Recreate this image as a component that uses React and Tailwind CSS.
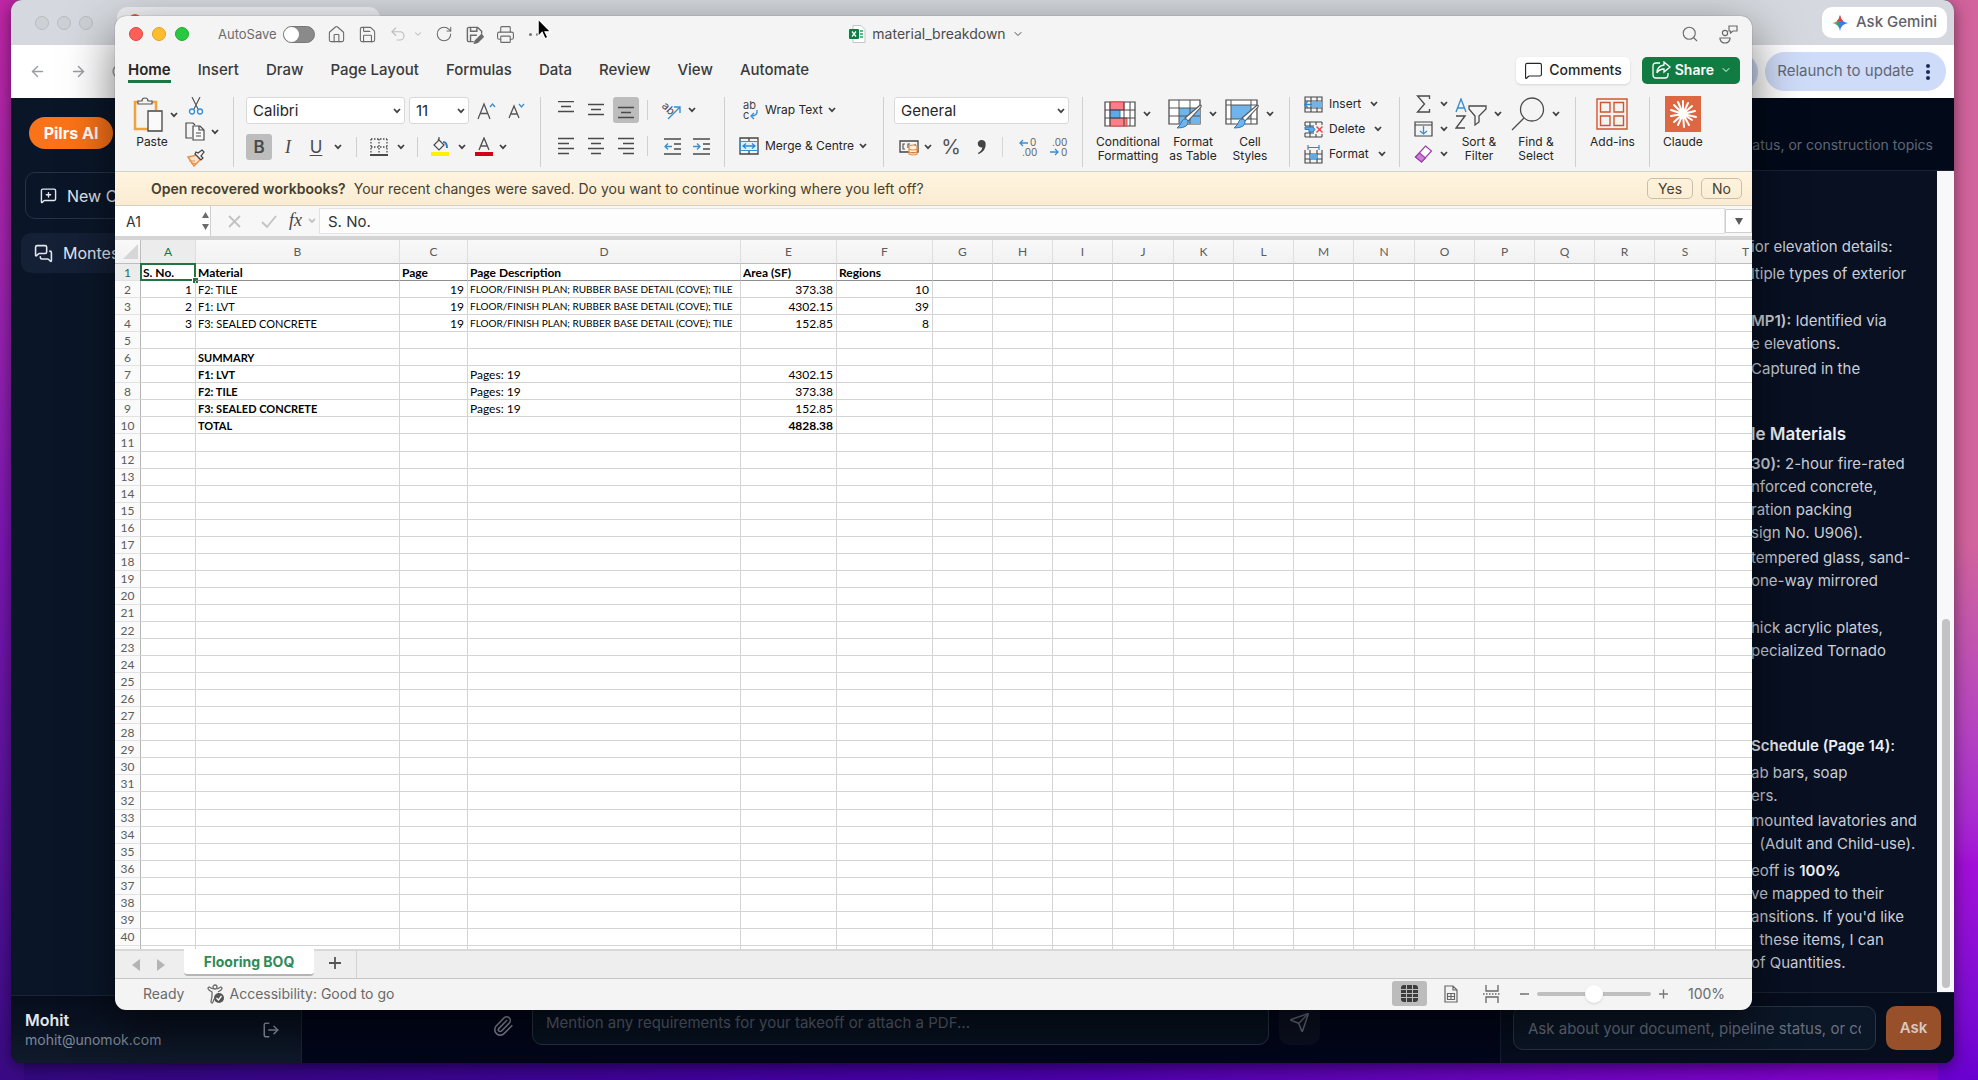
import { useState } from 'react';
import {
    ArrowLeft,
    ArrowRight,
    ChevronDown,
    House,
    LogOut,
    MessageSquare,
    MessageSquarePlus,
    MessagesSquare,
    Paperclip,
    Printer,
    RotateCw,
    Save,
    Search,
    Send,
    Undo2,
} from 'lucide-react';

const tabs = ['Insert', 'Draw', 'Page Layout', 'Formulas', 'Data', 'Review', 'View', 'Automate'];

const columns = [
    { name: 'A', width: 'w-[55px]' },
    { name: 'B', width: 'w-[204px]' },
    { name: 'C', width: 'w-[68px]' },
    { name: 'D', width: 'w-[273px]' },
    { name: 'E', width: 'w-[96px]' },
    { name: 'F', width: 'w-[96px]' },
    { name: 'G', width: 'w-[60px]' },
    { name: 'H', width: 'w-[60px]' },
    { name: 'I', width: 'w-[60px]' },
    { name: 'J', width: 'w-[61px]' },
    { name: 'K', width: 'w-[60px]' },
    { name: 'L', width: 'w-[60px]' },
    { name: 'M', width: 'w-[60px]' },
    { name: 'N', width: 'w-[61px]' },
    { name: 'O', width: 'w-[60px]' },
    { name: 'P', width: 'w-[60px]' },
    { name: 'Q', width: 'w-[60px]' },
    { name: 'R', width: 'w-[60px]' },
    { name: 'S', width: 'w-[61px]' },
    { name: 'T', width: 'w-[60px]' },
];

const plan = 'FLOOR/FINISH PLAN; RUBBER BASE DETAIL (COVE); TILE';

const cells = {
    1: { A: 'S. No.', B: 'Material', C: 'Page', D: 'Page Description', E: 'Area (SF)', F: 'Regions' },
    2: { A: 1, B: 'F2: TILE', C: 19, D: plan, E: '373.38', F: 10 },
    3: { A: 2, B: 'F1: LVT', C: 19, D: plan, E: '4302.15', F: 39 },
    4: { A: 3, B: 'F3: SEALED CONCRETE', C: 19, D: plan, E: '152.85', F: 8 },
    6: { B: 'SUMMARY' },
    7: { B: 'F1: LVT', D: 'Pages: 19', E: '4302.15' },
    8: { B: 'F2: TILE', D: 'Pages: 19', E: '373.38' },
    9: { B: 'F3: SEALED CONCRETE', D: 'Pages: 19', E: '152.85' },
    10: { B: 'TOTAL', E: '4828.38' },
};

const isBold = (row, col) => row === 1 || row === 10 || (row > 5 && col === 'B');
const isRight = (row, col) => row > 1 && (col === 'A' || col === 'C' || col === 'E' || col === 'F');

// capitals run wide in Lato, so the all-caps cells go a step down
function cellSize(row, col) {
    if (row > 1 && row < 5 && col === 'D') return 'text-[10px]/[15px]';
    if (row > 1 && col === 'B') return 'text-[11px]/[15px]';
    return 'text-[12px]/[15px]';
}

function Chev({ className = 'w-[10px]' }) {
    return (
        <span className={`flex shrink-0 justify-center ${className}`}>
            <svg width="8" height="6" viewBox="0 0 8 6" fill="none" stroke="#3f3f3f" strokeWidth="1.7">
                <path d="M1 1l3 3.2L7 1" />
            </svg>
        </span>
    );
}

function IconButton({ label, className = 'w-[26px]', children }) {
    return (
        <button aria-label={label} className={`flex h-[26px] shrink-0 items-center justify-center rounded-[3px] ${className}`}>
            {children}
        </button>
    );
}

function Divider() {
    return <span className="mx-2 h-5 w-px shrink-0 bg-[#cfcfcf]" />;
}

function Group({ className, children }) {
    return <div className={`flex h-[70px] shrink-0 border-r border-[#d0d0d0] ${className}`}>{children}</div>;
}

function Lines({ rows, shift = 0 }) {
    return (
        <svg width="16" height="18" viewBox="0 0 16 18" stroke="#4a4a4a" strokeWidth="1.3">
            {rows.map(([x1, x2], i) => (
                <path key={i} d={`M${x1} ${1.5 + shift + i * 5}H${x2}`} />
            ))}
        </svg>
    );
}

function BigButton({ icon, label, chevron = true, className }) {
    return (
        <button className={`flex shrink-0 flex-col items-center ${className}`}>
            <span className="flex h-[38px] items-center gap-1.5 pb-1">
                {icon}
                {chevron && <Chev />}
            </span>
            <span className="text-xs/[14px] whitespace-pre text-[#262626]">{label}</span>
        </button>
    );
}

function Brush() {
    return (
        <g>
            <path d="M33 9L20 23l-3-3L31 8q3-2 2 1z" fill="#f7f7f7" stroke="#555" strokeWidth="1.1" />
            <path d="M20 23q1 7-11 7 4-3 5-7 3-4 6 0z" fill="#6fb4ea" stroke="#2b7bc0" strokeWidth="1" />
        </g>
    );
}

function TitleBar() {
    return (
        <div className="grid h-9 shrink-0 grid-cols-[1fr_auto_1fr] items-center pl-[14px] text-[#6b6b6b]">
            <div className="flex items-center">
                <div className="flex gap-[9px]">
                    <button aria-label="Close" className="size-[14px] rounded-full border border-[#e0443e] bg-[#fe5f57]" />
                    <button aria-label="Minimise" className="size-[14px] rounded-full border border-[#dfa023] bg-[#febc2e]" />
                    <button aria-label="Zoom" className="size-[14px] rounded-full border border-[#1dad2b] bg-[#28c840]" />
                </div>
                <label className="ml-[29px] flex items-center gap-1.5 text-[13px]/5">
                    AutoSave
                    <input type="checkbox" className="peer sr-only" />
                    <span className="flex h-[17px] w-8 items-center rounded-full border border-[#777] bg-[#8a8a8a]">
                        <span className="size-[15px] rounded-full bg-white" />
                    </span>
                </label>
                <div className="ml-3 flex items-center gap-3">
                    <button aria-label="Home"><House size={19} strokeWidth={1.4} /></button>
                    <button aria-label="Save"><Save size={19} strokeWidth={1.4} /></button>
                    <button aria-label="Undo" className="flex items-center gap-1.5 text-[#bdbdbd]">
                        <Undo2 size={18} strokeWidth={1.5} />
                        <ChevronDown size={10} strokeWidth={2.5} />
                    </button>
                    <button aria-label="Redo"><RotateCw size={18} strokeWidth={1.4} /></button>
                    <button aria-label="Save as">
                        <svg width="19" height="19" viewBox="0 0 24 24" fill="none" stroke="currentColor" strokeWidth="1.8">
                            <path d="M11 21H5a2 2 0 0 1-2-2V5a2 2 0 0 1 2-2h11l5 5v3M7 3v5h8V3M7 21v-8h8" />
                            <path d="M21 12l-8 8-1 3 4-1 7-7z" fill="currentColor" />
                        </svg>
                    </button>
                    <button aria-label="Print"><Printer size={19} strokeWidth={1.4} /></button>
                    <button aria-label="More" className="ml-0.5 flex gap-1">
                        <span className="size-[3px] rounded-full bg-[#777]" />
                        <span className="size-[3px] rounded-full bg-[#777]" />
                        <span className="size-[3px] rounded-full bg-[#777]" />
                    </button>
                </div>
            </div>
            <button className="mr-2 flex items-center gap-1.5 text-[14px]/5 text-[#4c4c4c]">
                <svg width="17" height="18" viewBox="0 0 17 18">
                    <path d="M4 .5h8l4 4v13H4z" fill="#fff" stroke="#c4c4c4" />
                    <path d="M11 6h3M11 9h3M11 12h3" stroke="#21a366" strokeWidth="1.4" />
                    <rect y="4" width="10" height="10" rx="1" fill="#107c41" />
                    <path d="M3 6.500l4 5M7 6.500l-4 5" stroke="#fff" strokeWidth="1.3" />
                </svg>
                material_breakdown
                <ChevronDown size={12} strokeWidth={2} />
            </button>
            <div className="flex items-center justify-end gap-5 pr-[14px]">
                <button aria-label="Search"><Search size={18} strokeWidth={1.5} /></button>
                <button aria-label="Presence">
                    <svg width="19" height="19" viewBox="0 0 19 19" fill="none" stroke="currentColor" strokeWidth="1.2">
                        <circle cx="6" cy="8" r="2.600" />
                        <path d="M1 13h10v1q-1 4-5 4t-5-4zM10 1h8v5h-4l-2.500 2V6H10z" />
                    </svg>
                </button>
            </div>
        </div>
    );
}

function TabRow() {
    return (
        <div className="flex h-9 shrink-0 items-center justify-between pr-3 pl-[13px]">
            <nav className="flex items-center gap-[27px] text-[15px]/5 font-medium text-[#3a3a3a]">
                <button className="border-y-[3px] border-t-transparent border-b-[#217346] font-semibold text-[#262626]">Home</button>
                {tabs.map((tab) => (
                    <button key={tab}>{tab}</button>
                ))}
            </nav>
            <div className="flex gap-3 text-[14px]/5 font-medium">
                <button className="flex h-[27px] items-center gap-1.5 rounded-[5px] bg-white px-2 text-[#262626] shadow-sm">
                    <MessageSquare size={19} strokeWidth={1.4} />
                    Comments
                </button>
                <button className="flex h-[27px] items-center gap-1 rounded-[5px] bg-[#107c41] pr-2 pl-2.5 font-semibold text-white">
                    <svg width="19" height="18" viewBox="0 0 19 18" fill="none" stroke="#fff" strokeWidth="1.3">
                        <path d="M8 2H4Q1 2 1 5v9q0 3 3 3h9q3 0 3-3v-2" />
                        <path d="M12 1l6 5-6 5V8q-5 0-7 4 0-7 7-8z" />
                    </svg>
                    Share
                    <ChevronDown size={12} className="ml-0.5" />
                </button>
            </div>
        </div>
    );
}

function Ribbon() {
    return (
        <div className="flex h-[84px] shrink-0 border-b border-[#d5d2ca] pt-[9px] text-xs text-[#262626]">
            <Group className="w-[119px] pl-4">
                <button className="flex w-[52px] flex-col items-start">
                    <span className="flex h-[38px] items-start gap-1">
                        <svg width="34" height="36" viewBox="0 0 34 36" fill="none">
                            <path d="M8 5H4v27h14M20 5h5v8" stroke="#f0a33c" strokeWidth="2.500" />
                            <path d="M7 7V4h4q0-3 3-3t3 3h4v3z" stroke="#555" strokeWidth="1.2" fill="#f4f4f4" />
                            <path d="M17 14h14v20H17z" stroke="#444" strokeWidth="1.3" fill="#fafafa" />
                        </svg>
                        <Chev className="h-9 w-[10px] items-center" />
                    </span>
                    <span className="w-[42px] text-center leading-[14px]">Paste</span>
                </button>
                <div className="ml-px flex flex-col justify-between">
                    <button aria-label="Cut" className="w-6">
                        <svg width="16" height="18" viewBox="0 0 16 18" fill="none" className="mx-auto">
                            <path d="M4 0l6 12M12 0L6 12" stroke="#555" strokeWidth="1.2" />
                            <circle cx="4" cy="14.500" r="2.500" stroke="#2f8fdc" strokeWidth="1.3" />
                            <circle cx="12" cy="14.500" r="2.500" stroke="#2f8fdc" strokeWidth="1.3" />
                        </svg>
                    </button>
                    <button aria-label="Copy" className="flex items-center gap-1">
                        <svg width="22" height="20" viewBox="0 0 22 20" fill="none" stroke="#4a4a4a" strokeWidth="1.2">
                            <path d="M8 16H2V1h7l2 2" />
                            <path d="M9 4h7l4 4v10H9zM15 4v4h5M12 11h5M12 14h5" fill="#fafafa" />
                        </svg>
                        <Chev />
                    </button>
                    <button aria-label="Format painter" className="w-6">
                        <svg width="20" height="18" viewBox="0 0 20 18" fill="none" className="mx-auto">
                            <path d="M2 8l9-2 3 5-6 6z" stroke="#e8914a" strokeWidth="1.5" fill="#fde3c8" />
                            <path d="M3 12l6 0M5 14.500h5" stroke="#e8914a" />
                            <path d="M9 5l6 6 2-2-2-2 3-4-2-2-4 3-2-1z" stroke="#444" strokeWidth="1.2" fill="#f4f4f4" />
                        </svg>
                    </button>
                </div>
            </Group>

            <Group className="w-[307px] flex-col gap-[10px] pl-3">
                <div className="flex items-center gap-1 text-[15px]">
                    <div className="relative flex items-center">
                        <select aria-label="Font" className="h-[27px] w-[159px] appearance-none rounded-[3px] border border-[#d9d9d9] bg-white px-1.5">
                            <option>Calibri</option>
                        </select>
                        <Chev className="pointer-events-none absolute right-1 w-2" />
                    </div>
                    <div className="relative flex items-center">
                        <select aria-label="Font size" className="h-[27px] w-[60px] appearance-none rounded-[3px] border border-[#d9d9d9] bg-white px-1.5">
                            <option>11</option>
                        </select>
                        <Chev className="pointer-events-none absolute right-1 w-2" />
                    </div>
                    <IconButton label="Increase font size">
                        <svg width="19" height="18" viewBox="0 0 19 18" fill="none" stroke="#555" strokeWidth="1.3">
                            <path d="M1 17L7 2l6 15M3.500 11.500h7" />
                            <path d="M13 5l2.500-3L18 5" stroke="#3a8fd0" />
                        </svg>
                    </IconButton>
                    <IconButton label="Decrease font size">
                        <svg width="17" height="16" viewBox="0 0 17 16" fill="none" stroke="#555" strokeWidth="1.3">
                            <path d="M1 15L6 3l5 12M3 11h6" />
                            <path d="M11 1l2.500 3L16 1" stroke="#3a8fd0" />
                        </svg>
                    </IconButton>
                </div>
                <div className="flex items-center text-[17px] text-[#4a4a4a]">
                    <IconButton label="Bold" className="w-[26px] bg-[#bdbdbd] font-semibold">B</IconButton>
                    <IconButton label="Italic" className="w-8 font-['Liberation_Serif'] text-lg italic">I</IconButton>
                    <IconButton label="Underline" className="w-6 underline underline-offset-2">U</IconButton>
                    <Chev className="w-5" />
                    <Divider />
                    <IconButton label="Borders" className="w-7">
                        <svg width="18" height="18" viewBox="0 0 18 18" fill="none" stroke="#4a4a4a" strokeWidth="1.3">
                            <path d="M1 1h16M1 9h16M1 1v15M9 1v15M17 1v15" strokeDasharray="1.500 1.500" />
                            <path d="M0 17h18" strokeWidth="1.8" />
                        </svg>
                    </IconButton>
                    <Chev className="w-4" />
                    <Divider />
                    <IconButton label="Fill colour" className="w-7">
                        <svg width="18" height="20" viewBox="0 0 18 20" fill="none">
                            <path d="M7 2l6 6-5 5-5-5 5-5V0" stroke="#4a4a4a" strokeWidth="1.2" />
                            <path d="M12 5q4 0 4 6" stroke="#2f7fc8" strokeWidth="2" />
                            <path d="M0 17h18" stroke="#fff000" strokeWidth="4" />
                        </svg>
                    </IconButton>
                    <Chev className="w-4" />
                    <IconButton label="Font colour" className="w-7">
                        <svg width="18" height="20" viewBox="0 0 18 20" fill="none">
                            <path d="M4 13L9 1l5 12M6 9h6" stroke="#555" strokeWidth="1.4" />
                            <path d="M0 17h18" stroke="#d0021b" strokeWidth="4" />
                        </svg>
                    </IconButton>
                    <Chev />
                </div>
            </Group>

            <Group className="w-[184px] flex-col gap-[10px] pl-3">
                <div className="flex items-center">
                    <div className="flex gap-1">
                        <IconButton label="Top align"><Lines rows={[[0, 16], [3, 13], [0, 16]]} shift={-1} /></IconButton>
                        <IconButton label="Middle align"><Lines rows={[[0, 16], [3, 13], [0, 16]]} shift={2} /></IconButton>
                        <IconButton label="Bottom align" className="w-[26px] bg-[#bdbdbd]"><Lines rows={[[0, 16], [3, 13], [0, 16]]} shift={5} /></IconButton>
                    </div>
                    <Divider />
                    <IconButton label="Orientation" className="w-8">
                        <svg width="20" height="20" viewBox="0 0 20 20" fill="none" className="overflow-visible">
                            <text x="0" y="11" transform="rotate(45 5 8)" fontSize="11" fontFamily="Inter" fill="#444">ab</text>
                            <path d="M6 19L18 7M12 7h6v6" stroke="#3a8fd0" strokeWidth="1.4" />
                        </svg>
                    </IconButton>
                    <Chev className="w-2" />
                </div>
                <div className="flex items-center">
                    <div className="flex gap-1">
                        <IconButton label="Align left"><Lines rows={[[0, 16], [0, 11], [0, 16], [0, 11]]} /></IconButton>
                        <IconButton label="Align centre"><Lines rows={[[0, 16], [3, 13], [0, 16], [3, 13]]} /></IconButton>
                        <IconButton label="Align right"><Lines rows={[[0, 16], [5, 16], [0, 16], [5, 16]]} /></IconButton>
                    </div>
                    <Divider />
                    <IconButton label="Decrease indent" className="w-8">
                        <svg width="17" height="17" viewBox="0 0 17 17" fill="none" stroke="#4a4a4a" strokeWidth="1.3">
                            <path d="M0 1h17M10 6h7M10 11h7M0 16h17" />
                            <path d="M8 8.500H1M4 5.500l-3 3 3 3" stroke="#3a8fd0" />
                        </svg>
                    </IconButton>
                    <IconButton label="Increase indent">
                        <svg width="17" height="17" viewBox="0 0 17 17" fill="none" stroke="#4a4a4a" strokeWidth="1.3">
                            <path d="M0 1h17M10 6h7M10 11h7M0 16h17" />
                            <path d="M0 8.500h7M4 5.500l3 3-3 3" stroke="#3a8fd0" />
                        </svg>
                    </IconButton>
                </div>
            </Group>

            <Group className="w-[159px] flex-col gap-[10px] pl-3">
                <button className="flex h-[26px] items-center gap-1">
                    <svg width="24" height="22" viewBox="0 0 24 22" fill="none" className="overflow-visible">
                        <text x="6" y="10" fontSize="11" fontFamily="Inter" fill="#444">ab</text>
                        <text x="6" y="20" fontSize="11" fontFamily="Inter" fill="#444">c</text>
                        <path d="M20 11q1 6-6 6M17 14l-3 3 3 3" stroke="#3a8fd0" strokeWidth="1.4" />
                    </svg>
                    Wrap Text
                    <Chev />
                </button>
                <button className="flex h-[26px] items-center gap-1 whitespace-nowrap">
                    <svg width="24" height="18" viewBox="0 0 24 18" fill="none">
                        <path d="M3 1h18v16H3zM12 1v4M12 13v4" stroke="#444" strokeWidth="1.3" />
                        <path d="M3.500 4.500h17v9h-17z" fill="#dff0fd" stroke="#3a8fd0" />
                        <path d="M6 9h12M9 6.500L6 9l3 2.500M15 6.500L18 9l-3 2.500" stroke="#2f86d0" strokeWidth="1.3" />
                    </svg>
                    Merge &amp; Centre
                    <Chev />
                </button>
            </Group>

            <Group className="w-[199px] flex-col gap-[10px] pl-[10px]">
                <div className="relative flex w-[175px] items-center text-[15px]">
                    <select aria-label="Number format" className="h-[27px] w-full appearance-none rounded-[3px] border border-[#d9d9d9] bg-white px-1.5">
                        <option>General</option>
                    </select>
                    <Chev className="pointer-events-none absolute right-1 w-2" />
                </div>
                <div className="flex items-center text-[#555]">
                    <IconButton label="Currency" className="w-[30px]">
                        <svg width="20" height="18" viewBox="0 0 20 18" fill="none">
                            <path d="M1 3h18v11H1z" stroke="#444" strokeWidth="1.3" />
                            <path d="M6 6H4v5h2M11 6H9v4M16 6v2" stroke="#555" strokeWidth="1.2" />
                            <path d="M10 8q4-2 8 0v8q-4 2-8 0zM10 11q4 2 8 0M10 14q4 2 8 0" fill="#fff1e2" stroke="#ef8a3c" strokeWidth="1.200" />
                        </svg>
                    </IconButton>
                    <Chev className="w-2" />
                    <IconButton label="Percent" className="w-[38px] text-xl">%</IconButton>
                    <IconButton label="Comma style" className="w-[22px]">
                        <svg width="9" height="16" viewBox="0 0 9 16">
                            <path d="M4.500 1a3.700 3.700 0 1 0 .8 7.300Q5 12 1 14l.5 1.200Q9 12 8.700 5A4 4 0 0 0 4.500 1z" fill="#444" />
                        </svg>
                    </IconButton>
                    <span className="mx-2.5 h-5 w-px shrink-0 bg-[#d6d6d6]" />
                    <IconButton label="Increase decimal" className="w-[30px]">
                        <svg width="18" height="20" viewBox="0 0 18 20" fill="none" className="overflow-visible">
                            <text x="11" y="9" fontSize="10" fontFamily="Inter" fill="#666">0</text>
                            <text x="3" y="19" fontSize="10" fontFamily="Inter" fill="#666">.00</text>
                            <path d="M9 6H1M4 3L1 6l3 3" stroke="#3a8fd0" strokeWidth="1.3" />
                        </svg>
                    </IconButton>
                    <IconButton label="Decrease decimal" className="w-[30px]">
                        <svg width="18" height="20" viewBox="0 0 18 20" fill="none" className="overflow-visible">
                            <text x="3" y="9" fontSize="10" fontFamily="Inter" fill="#666">.00</text>
                            <text x="12" y="19" fontSize="10" fontFamily="Inter" fill="#666">0</text>
                            <path d="M1 15h8M6 12l3 3-3 3" stroke="#3a8fd0" strokeWidth="1.3" />
                        </svg>
                    </IconButton>
                </div>
            </Group>

            <Group className="w-[207px] pl-[9px]">
                <BigButton
                    className="w-[72px]"
                    label={'Conditional\nFormatting'}
                    icon={
                        <svg width="32" height="26" viewBox="0 0 32 26" fill="none">
                            <path d="M1 1h30v24H1z" fill="#fff" stroke="#444" strokeWidth="1.2" />
                            <path d="M6 1h14v8H6zM6 17h17v8H6z" fill="#fb7f86" stroke="#e5484d" />
                            <path d="M6 9h10v8H6z" fill="#5ea9e8" stroke="#2b7bc0" />
                            <path d="M1 9h30M1 17h30M6 1v24M20 1v24M26 1v24" stroke="#444" />
                        </svg>
                    }
                />
                <BigButton
                    className="w-[58px]"
                    label={'Format\nas Table'}
                    icon={
                        <svg width="34" height="32" viewBox="0 0 34 32" fill="none">
                            <path d="M1 2h31v24H1z" fill="#fff" stroke="#444" strokeWidth="1.2" />
                            <path d="M11 10h21v16H11z" fill="#6fb4ea" />
                            <path d="M1 10h31M1 18h31M11 2v24M22 2v24" stroke="#555" />
                            <Brush />
                        </svg>
                    }
                />
                <BigButton
                    className="w-[56px]"
                    label={'Cell\nStyles'}
                    icon={
                        <svg width="34" height="32" viewBox="0 0 34 32" fill="none">
                            <path d="M1 2h31v24H1z" fill="#fff" stroke="#444" strokeWidth="1.2" />
                            <path d="M6 7h20v14H6z" fill="#6fb4ea" />
                            <path d="M1 7h31M1 21h31M6 2v24M26 2v24" stroke="#555" />
                            <Brush />
                        </svg>
                    }
                />
            </Group>

            <Group className="w-[110px] pl-[14px]">
                <div className="-mt-1 flex flex-col gap-[3px]">
                    <button className="flex h-[22px] items-center gap-1.5">
                        <svg width="19" height="17" viewBox="0 0 19 17" fill="none">
                            <path d="M1 1h17v15H1zM1 5h17M1 12h17M7 1v15M13 1v15" stroke="#444" strokeWidth="1.1" />
                            <path d="M8 5.500h10v6H8z" fill="#6fb4ea" />
                            <path d="M8 8.500H1M4 5L.8 8.500 4 12" stroke="#2f86d0" strokeWidth="1.5" />
                        </svg>
                        Insert
                        <Chev className="ml-0.5 w-[10px]" />
                    </button>
                    <button className="flex h-[22px] items-center gap-1.5">
                        <svg width="19" height="17" viewBox="0 0 19 17" fill="none">
                            <path d="M1 1h17M1 16h17M1 1v4M1 12v4M18 1v3M18 13v3M6 1v15M12 1v3M12 13v3M1 5h9M1 12h9" stroke="#444" strokeWidth="1.1" />
                            <path d="M1 6h8l2 2.500L9 11H5V8.500H1z" fill="#5ea9e8" stroke="#2b7bc0" />
                            <path d="M12.500 5.500l6 6M18.500 5.500l-6 6" stroke="#e5484d" strokeWidth="1.5" />
                        </svg>
                        Delete
                        <Chev className="ml-0.5 w-[10px]" />
                    </button>
                    <button className="flex h-[22px] items-center gap-1.5">
                        <svg width="19" height="19" viewBox="0 0 19 19" fill="none">
                            <path d="M1 5v13h17V5M1 9h17M1 14h17M6 5v13M13 5v13" stroke="#444" strokeWidth="1.1" />
                            <path d="M6 9h7v5H6z" fill="#5ea9e8" />
                            <path d="M4 0v5M15 0v5M4 2.500h11" stroke="#2f86d0" strokeWidth="1.2" />
                        </svg>
                        Format
                        <Chev className="ml-0.5 w-[10px]" />
                    </button>
                </div>
            </Group>

            <Group className="w-[176px] pl-[14px]">
                <div className="-mt-1 flex flex-col gap-[3px]">
                    <button aria-label="AutoSum" className="flex h-[22px] items-center gap-1.5">
                        <svg width="19" height="18" viewBox="0 0 18 18" fill="none" stroke="#4a4a4a" strokeWidth="1.3">
                            <path d="M15 4V1H3l7 8-7 8h12v-3" />
                        </svg>
                        <Chev />
                    </button>
                    <button aria-label="Fill" className="flex h-[22px] items-center gap-1.5">
                        <svg width="19" height="16" viewBox="0 0 19 16" fill="none">
                            <path d="M1 1h17v14H1zM1 4h17" stroke="#444" strokeWidth="1.2" />
                            <path d="M9.500 5v8M6 10l3.500 3L13 10" stroke="#3a8fd0" strokeWidth="1.3" />
                        </svg>
                        <Chev />
                    </button>
                    <button aria-label="Clear" className="flex h-[22px] items-center gap-1.5">
                        <svg width="19" height="18" viewBox="0 0 18 18" fill="none" stroke="#9b3fa8" strokeWidth="1.2">
                            <path d="M11 1l6 5L7 17l-6-5z" fill="#fff" />
                            <path d="M5 8l6 5-4 4-6-5z" fill="#cf7fd8" />
                        </svg>
                        <Chev />
                    </button>
                </div>
                <BigButton
                    className="w-[60px]"
                    label={'Sort &\nFilter'}
                    icon={
                        <svg width="32" height="32" viewBox="0 0 32 32" fill="none">
                            <path d="M1 14L6 1l5 13M3 10h6" stroke="#3a8fd0" strokeWidth="1.4" />
                            <path d="M1 18h9L1 30h9" stroke="#4a4a4a" strokeWidth="1.4" />
                            <path d="M14 8h17v3l-7 7v6l-4 3v-9l-6-7z" stroke="#4a4a4a" strokeWidth="1.3" />
                        </svg>
                    }
                />
                <BigButton
                    className="w-[54px]"
                    label={'Find &\nSelect'}
                    icon={
                        <svg width="34" height="34" viewBox="0 0 34 34" fill="none" stroke="#4a4a4a" strokeWidth="1.3">
                            <circle cx="21" cy="12.500" r="11.500" />
                            <path d="M13 21L1 33" />
                        </svg>
                    }
                />
            </Group>

            <Group className="w-[74px] justify-center">
                <BigButton
                    chevron={false}
                    label="Add-ins"
                    icon={
                        <svg width="32" height="32" viewBox="0 0 32 32" fill="none" stroke="#d0552f" strokeWidth="1.4">
                            <path d="M1 1h30v30H1zM4.500 4.500h9.500v9.500H4.500zM18 4.500h9.500v9.500H18zM4.500 18h9.500v9.500H4.500zM18 18h9.500v9.500H18z" />
                        </svg>
                    }
                />
            </Group>

            <div className="ml-[13px]">
                <BigButton
                    chevron={false}
                    label="Claude"
                    icon={
                        <svg width="36" height="36" viewBox="0 0 36 36" fill="none">
                            <path d="M0 0h36v36H0z" fill="#dd6740" />
                            <path
                                d="M18 18V5M18 18l5-11M18 18l9-8M18 18l12-3M18 18l13 3M18 18l9 6M18 18l6 11M18 18l1 13M18 18l-5 11M18 18l-9 8M18 18l-12 2M18 18L6 14M18 18L9 9M18 18L13 6"
                                stroke="#fff"
                                strokeWidth="2"
                                strokeLinecap="round"
                            />
                        </svg>
                    }
                />
            </div>
        </div>
    );
}

function RecoveryBar() {
    return (
        <div className="flex h-[34px] shrink-0 items-center border-b border-[#d8d0bd] bg-linear-to-b from-[#fff4df] to-[#faecd2] pr-[10px] pl-9 text-[14px]/5 text-[#46402f]">
            <span className="font-semibold">Open recovered workbooks?</span>
            <span className="ml-2 grow">Your recent changes were saved. Do you want to continue working where you left off?</span>
            <button className="h-[21px] rounded-[5px] border border-[#c9bfa8] px-[10px] leading-[18px]">Yes</button>
            <button className="ml-2 h-[21px] rounded-[5px] border border-[#c9bfa8] px-[10px] leading-[18px]">No</button>
        </div>
    );
}

function FormulaBar() {
    const [value, setValue] = useState('S. No.');

    return (
        <div className="flex h-[34px] shrink-0 items-center border-b-4 border-[#d4d4d4] bg-[#f7f7f7] text-[14px] text-[#333]">
            <div className="flex h-full w-24 items-center border-r border-[#cfcfcf] bg-white pl-[11px]">
                <input aria-label="Name box" defaultValue="A1" className="w-[75px] outline-none" />
                <svg width="9" height="20" viewBox="0 0 9 20" fill="#6b6b6b" className="shrink-0">
                    <path d="M4.500 1L8 7H1zM4.500 19L8 13H1z" />
                </svg>
            </div>
            <svg width="104" height="18" viewBox="0 0 104 18" fill="none" className="shrink-0" stroke="#c2c2c2" strokeWidth="1.8">
                <path d="M18 4l11 11M29 4L18 15M51 10l5 5L65 4" />
                <text x="78" y="14" fontSize="18" fontStyle="italic" fontFamily="Liberation Serif" fill="#444" stroke="none">fx</text>
                <path d="M98 7l3 3 3-3" />
            </svg>
            <input
                aria-label="Formula"
                value={value}
                onChange={(e) => setValue(e.target.value)}
                className="ml-1 h-[26px] min-w-0 grow border border-[#e2e2e2] bg-[#fdfdfd] pl-2 text-[15px] outline-none"
            />
            <button aria-label="Expand formula bar" className="flex h-[24px] w-[27px] items-center justify-center border border-[#cfcfcf] bg-white">
                <svg width="8" height="7" viewBox="0 0 8 7" fill="#5a5a5a">
                    <path d="M0 0h8L4 7z" />
                </svg>
            </button>
        </div>
    );
}

function Sheet() {
    const rows = Array.from({ length: 41 }, (_, i) => i + 1);

    return (
        <div className="min-h-0 grow overflow-hidden bg-white">
            <table className="h-[723px] w-[1661px] table-fixed border-separate border-spacing-0 font-[Lato,sans-serif] text-[12px]/4 text-black">
                <colgroup>
                    <col className="w-[26px]" />
                    {columns.map((col) => (
                        <col key={col.name} className={col.width} />
                    ))}
                </colgroup>
                <thead>
                    <tr className="h-6 bg-linear-to-b from-[#f9f9f9] to-[#f1f1f1] text-[#5c5c5c]">
                        <th className="border-r border-b border-[#bdbdbd] p-0">
                            <svg width="17" height="16" viewBox="0 0 17 16" className="ml-auto">
                                <path d="M15 0v15H0z" fill="#d6d6d6" />
                            </svg>
                        </th>
                        {columns.map((col) => (
                            <th
                                key={col.name}
                                className={`border-r border-b border-r-[#dedede] border-b-[#bdbdbd] p-0 font-normal ${col.name === 'A' ? 'bg-[#ececec] text-[#217346]' : ''}`}
                            >
                                {col.name}
                            </th>
                        ))}
                    </tr>
                </thead>
                <tbody>
                    {rows.map((row) => (
                        <tr key={row} className="h-[17px]">
                            <th
                                className={`border-r border-b border-r-[#b5b5b5] border-b-[#e2e2e2] p-0 text-[12px]/[15px] font-normal ${row === 1 ? 'bg-[#ececec] text-[#217346]' : 'bg-[#fafafa] text-[#5c5c5c]'}`}
                            >
                                {row > 40 ? '' : row}
                            </th>
                            {columns.map((col) => (
                                <td
                                    key={col.name}
                                    className={`relative border-r border-r-[#d4d4d4] border-b p-0 whitespace-nowrap ${row === 1 ? 'border-b-[#8f8f8f]' : 'border-b-[#d4d4d4]'} ${isBold(row, col.name) ? 'font-bold' : ''} ${isRight(row, col.name) ? 'pr-[3px] text-right' : 'pl-[2px]'} ${cellSize(row, col.name)}`}
                                >
                                    <div className="overflow-hidden">{cells[row]?.[col.name]}</div>
                                    {row === 1 && col.name === 'A' && (
                                        <span className="absolute -inset-x-px -top-px -bottom-px border-2 border-[#217346]">
                                            <span className="absolute -right-1 -bottom-1 size-[6px] border-t border-l border-white bg-[#217346]" />
                                        </span>
                                    )}
                                </td>
                            ))}
                        </tr>
                    ))}
                </tbody>
            </table>
        </div>
    );
}

function SheetTabs() {
    return (
        <div className="flex h-[30px] shrink-0 border-t-2 border-b border-t-[#d8d8d8] border-b-[#c6c6c6] bg-[#eeeeee] text-[14px]/5">
            <div className="flex items-center gap-[17px] pl-[17px]">
                <button aria-label="Previous sheet">
                    <svg width="8" height="12" viewBox="0 0 8 12" fill="#b4b4b4"><path d="M8 0v12L0 6z" /></svg>
                </button>
                <button aria-label="Next sheet">
                    <svg width="8" height="12" viewBox="0 0 8 12" fill="#b4b4b4"><path d="M0 0v12l8-6z" /></svg>
                </button>
            </div>
            <button className="-mt-0.5 ml-[19px] h-[27px] w-[130px] rounded-b-[4px] border-b-2 border-[#b5b5b5] bg-white font-bold text-[#2f8a58]">Flooring BOQ</button>
            <button aria-label="Add sheet" className="flex w-[43px] items-center justify-center border-r border-[#d2d2d2] pb-1">
                <svg width="12" height="12" viewBox="0 0 12 12" stroke="#555" strokeWidth="1.8"><path d="M6 0v12M0 6h12" /></svg>
            </button>
        </div>
    );
}

function StatusBar() {
    return (
        <div className="flex h-[31px] shrink-0 items-center pr-7 pb-0.5 pl-7 text-[14px]/5 text-[#6a6a6a]">
            <span>Ready</span>
            <button className="ml-[23px] flex grow items-center gap-1">
                <svg width="18" height="20" viewBox="0 0 18 20" fill="none" stroke="#6a6a6a" strokeWidth="1.3">
                    <circle cx="8" cy="3" r="2" />
                    <path d="M6 5L2 3Q0 4 2 6l3 2v4l-1 6q1 2 2 0l1-3M10 5l4-2q2 1 0 3l-3 2" />
                    <circle cx="12" cy="14" r="5" fill="#555" stroke="none" />
                    <path d="M9.500 14l2 2 3-4" stroke="#fff" />
                </svg>
                Accessibility: Good to go
            </button>
            <button aria-label="Normal view" className="flex h-[25px] w-[35px] items-center justify-center rounded-[3px] bg-[#bcbcbc]">
                <svg width="17" height="17" viewBox="0 0 17 17">
                    <rect width="17" height="17" rx="3" fill="#3c3c3c" />
                    <path d="M0 4.500h17M0 8.500h17M0 12.500h17M5.500 0v17M11.500 0v17" stroke="#bcbcbc" />
                </svg>
            </button>
            <button aria-label="Page layout" className="ml-[17px]">
                <svg width="14" height="18" viewBox="0 0 14 18" fill="none" stroke="#666" strokeWidth="1.2">
                    <path d="M1 1h8l4 4v12H1zM9 1v4h4M3.500 8.500h7v6h-7zM3.500 11.500h7M7 8.500v6" />
                </svg>
            </button>
            <button aria-label="Page break preview" className="ml-[25px]">
                <svg width="18" height="18" viewBox="0 0 18 18" fill="none" stroke="#666" strokeWidth="1.3">
                    <path d="M3 0v6h12V0M3 18v-6h12v6" />
                    <path d="M0 9h18" strokeDasharray="1.500 1.500" />
                </svg>
            </button>
            <button aria-label="Zoom out" className="ml-[19px]">
                <svg width="9" height="10" viewBox="0 0 9 10" stroke="#777" strokeWidth="1.6"><path d="M0 5h9" /></svg>
            </button>
            <input
                type="range"
                aria-label="Zoom"
                className="mx-2 h-[18px] w-[114px] appearance-none bg-transparent [&::-webkit-slider-runnable-track]:h-1 [&::-webkit-slider-runnable-track]:rounded-full [&::-webkit-slider-runnable-track]:bg-[#bfbfbf] [&::-webkit-slider-thumb]:-mt-[7px] [&::-webkit-slider-thumb]:size-[18px] [&::-webkit-slider-thumb]:appearance-none [&::-webkit-slider-thumb]:rounded-full [&::-webkit-slider-thumb]:bg-white [&::-webkit-slider-thumb]:shadow"
            />
            <button aria-label="Zoom in">
                <svg width="9" height="10" viewBox="0 0 9 10" stroke="#777" strokeWidth="1.4"><path d="M0 5h9M4.500 .5v9" /></svg>
            </button>
            <span className="ml-5 w-9">100%</span>
        </div>
    );
}

function ExcelWindow() {
    return (
        <section className="absolute top-4 right-[226px] bottom-[70px] left-[115px] flex flex-col overflow-hidden rounded-[11px] bg-[#f4f4f4] shadow-[0_16px_50px_rgba(0,0,0,0.55),0_0_1px_rgba(0,0,0,0.6)]">
            <TitleBar />
            <TabRow />
            <Ribbon />
            <RecoveryBar />
            <FormulaBar />
            <Sheet />
            <SheetTabs />
            <StatusBar />
        </section>
    );
}

function Chat() {
    return (
        <div className="flex grow flex-col overflow-hidden pt-16 pl-[250px] text-[15px]/[23px] whitespace-pre text-[#c9ced8]">
            <p>ior elevation details:</p>
            <p className="mt-1">ltiple types of exterior</p>
            <p className="mt-6"><b className="font-semibold">MP1):</b> Identified via{'\n'}e elevations.</p>
            <p className="mt-0.5">Captured in the</p>
            <h2 className="mt-[43px] text-[17px]/[23px] font-semibold text-[#eceff5]">le Materials</h2>
            <p className="mt-1.5"><b className="font-semibold">30):</b> 2-hour fire-rated{'\n'}nforced concrete,{'\n'}ration packing{'\n'}sign No. U906).</p>
            <p className="mt-0.5">tempered glass, sand-{'\n'}one-way mirrored</p>
            <p className="mt-6">hick acrylic plates,{'\n'}pecialized Tornado</p>
            <p className="mt-[72px] text-[#eceff5]"><b className="font-semibold">Schedule (Page 14)</b>:</p>
            <p className="mt-1">ab bars, soap{'\n'}ers.</p>
            <p className="mt-0.5">mounted lavatories and{'\n'}  (Adult and Child-use).</p>
            <p className="mt-1">eoff is <b className="font-semibold text-[#eceff5]">100%</b>{'\n'}ve mapped to their{'\n'}ansitions. If you'd like{'\n'}  these items, I can{'\n'}of Quantities.</p>
        </div>
    );
}

function BrowserWindow() {
    return (
        <section className="absolute top-0 right-6 bottom-[17px] left-[11px] flex flex-col overflow-hidden rounded-[11px] bg-[#02061a] shadow-[0_4px_16px_rgba(0,0,0,0.5)]">
            <header className="flex h-[45px] shrink-0 bg-[#d5d8de] pr-[7px] pl-6">
                <div className="flex items-center gap-2">
                    <button aria-label="Close browser" className="size-[14px] rounded-full border border-[#b9bbc0] bg-[#cdd0d5]" />
                    <button aria-label="Minimise browser" className="size-[14px] rounded-full border border-[#b9bbc0] bg-[#cdd0d5]" />
                    <button aria-label="Zoom browser" className="size-[14px] rounded-full border border-[#b9bbc0] bg-[#cdd0d5]" />
                </div>
                <div className="mt-[7px] ml-6 h-full w-[263px] rounded-t-[11px] bg-[#f1f2f5] pt-[7px] pl-3">
                    <span className="block size-3 rounded-full bg-[#e2603c]" />
                </div>
                <button className="mt-[7px] ml-auto flex h-[31px] items-center gap-2 rounded-[10px] bg-white px-[10px] text-[15px] font-medium text-[#5f6268]">
                    <svg width="16" height="16" viewBox="0 0 16 16">
                        <defs>
                            <linearGradient id="spark" x1="0" y1="0" x2="1" y2="0">
                                <stop offset="0" stopColor="#f6b51e" />
                                <stop offset="0.35" stopColor="#3aa757" />
                                <stop offset="0.5" stopColor="#3b7ded" />
                                <stop offset="1" stopColor="#2f6df0" />
                            </linearGradient>
                        </defs>
                        <path d="M8 0q1 7 8 8-7 1-8 8-1-7-8-8 7-1 8-8z" fill="url(#spark)" />
                        <path d="M8 0q.7 4 3 6H5q2.300-2 3-6z" fill="#e94235" />
                    </svg>
                    Ask Gemini
                </button>
            </header>
            <div className="flex h-[53px] shrink-0 items-center bg-white pr-2 pl-[18px] text-[#9a9da3]">
                <button aria-label="Back"><ArrowLeft size={17} strokeWidth={2} /></button>
                <button aria-label="Forward" className="ml-6"><ArrowRight size={17} strokeWidth={2} /></button>
                <button aria-label="Reload" className="ml-6"><RotateCw size={17} strokeWidth={2} /></button>
                <span className="ml-auto h-[38px] w-24 rounded-full bg-[#c9d6f5]" />
                <button className="ml-[7px] flex h-[39px] items-center gap-3 rounded-full bg-[#cfdcf9] pr-4 pl-3 text-[15px] text-[#5f6776]">
                    Relaunch to update
                    <svg width="4" height="16" viewBox="0 0 4 16" fill="#1b2a5a">
                        <circle cx="2" cy="2" r="2" /><circle cx="2" cy="8" r="2" /><circle cx="2" cy="14" r="2" />
                    </svg>
                </button>
            </div>
            <div className="flex min-h-0 grow">
                <aside className="flex w-[291px] shrink-0 flex-col border-r border-[#1b2536] bg-[#0a1628] text-base text-[#e3e7ee]">
                    <div className="pt-[19px] pl-[18px]">
                        <span className="flex h-8 w-[84px] items-center justify-center rounded-full bg-[#fb7318] text-base font-bold text-white">Pilrs AI</span>
                    </div>
                    <button className="mt-[23px] ml-[14px] flex h-[47px] items-center gap-[10px] rounded-[10px] border border-[#25324a] pl-[14px]">
                        <MessageSquarePlus size={17} strokeWidth={2} />
                        New Chat
                    </button>
                    <button className="mt-[14px] ml-[10px] flex h-10 items-center gap-[10px] rounded-[10px] bg-[#142036] pl-[13px]">
                        <MessagesSquare size={19} strokeWidth={2} />
                        Montessori
                    </button>
                    <div className="mt-auto flex h-[68px] items-center justify-between border-t border-[#1b2536] bg-linear-to-b from-[#070d1c] to-[#0f1a2a] pr-[21px] pl-[14px]">
                        <div>
                            <p className="text-base/5 font-semibold">Mohit</p>
                            <p className="text-[14px]/5 text-[#7d8798]">mohit@unomok.com</p>
                        </div>
                        <button aria-label="Log out" className="text-[#8c96a6]"><LogOut size={18} strokeWidth={2} /></button>
                    </div>
                </aside>
                <main className="flex min-w-0 grow items-end gap-[10px] pb-[18px] pl-[190px]">
                    <button aria-label="Attach" className="mb-2 text-[#858c99]"><Paperclip size={22} strokeWidth={1.7} /></button>
                    <input
                        aria-label="Requirements"
                        placeholder="Mention any requirements for your takeoff or attach a PDF..."
                        className="ml-2 h-[46px] min-w-0 grow rounded-[10px] border border-[#2a3343] bg-[#07111f] px-[13px] text-[15px] placeholder:text-[#565f6e]"
                    />
                    <button aria-label="Send" className="mr-[180px] flex h-[46px] w-[41px] items-center justify-center rounded-[10px] bg-[#0b1020] text-[#636b7a]">
                        <Send size={21} strokeWidth={1.7} />
                    </button>
                </main>
                <aside className="flex w-[454px] shrink-0 flex-col border-l border-[#151e30] bg-[#081022]">
                    <p className="flex h-[73px] items-center justify-end border-b border-[#1b2333] bg-[#020a1a] pt-6 pr-[21px] pb-1 text-[14px] whitespace-nowrap text-[#5f6775]">
                        tatus, or construction topics
                    </p>
                    <div className="flex min-h-0 grow">
                        <Chat />
                        <div className="flex w-[17px] shrink-0 items-end justify-center bg-[#f8f8fa] pb-1">
                            <span className="h-[369px] w-2 rounded-full bg-[#c3c3c5]" />
                        </div>
                    </div>
                    <form className="flex h-[71px] shrink-0 items-center gap-[10px] border-t border-[#1b2333] bg-[#060d1d] pr-[13px] pl-3">
                        <input
                            aria-label="Question"
                            placeholder="Ask about your document, pipeline status, or construction topics"
                            className="h-11 min-w-0 grow rounded-[10px] border border-[#2a3343] bg-[#0b1626] px-[14px] text-[15px] placeholder:text-[#687080]"
                        />
                        <button type="button" className="h-11 w-[55px] rounded-[10px] bg-[#97502a] text-[15px] font-semibold text-[#d6c9c2]">Ask</button>
                    </form>
                </aside>
            </div>
        </section>
    );
}

export default function App() {
    return (
        <div className="relative h-screen w-full overflow-hidden bg-linear-to-r from-[#33087f] via-[#4800aa] to-[#8a00d0] font-[Inter,sans-serif]">
            <div className="absolute inset-y-0 left-0 w-6 bg-linear-to-b from-[#c026a6] via-[#7d16b4] to-[#3a0a86]" />
            <div className="absolute inset-y-0 right-0 w-10 bg-linear-to-b from-[#d2639c] from-50% via-[#a30fd8] via-80% to-[#6a00d0]" />
            <BrowserWindow />
            <ExcelWindow />
            <svg className="absolute top-[18px] left-[537px]" width="16" height="23" viewBox="0 0 14 20">
                <path d="M1 1v15l3.500-3.500L7 18l2.500-1L7 12h5z" fill="#000" stroke="#fff" strokeWidth="1" />
            </svg>
        </div>
    );
}
